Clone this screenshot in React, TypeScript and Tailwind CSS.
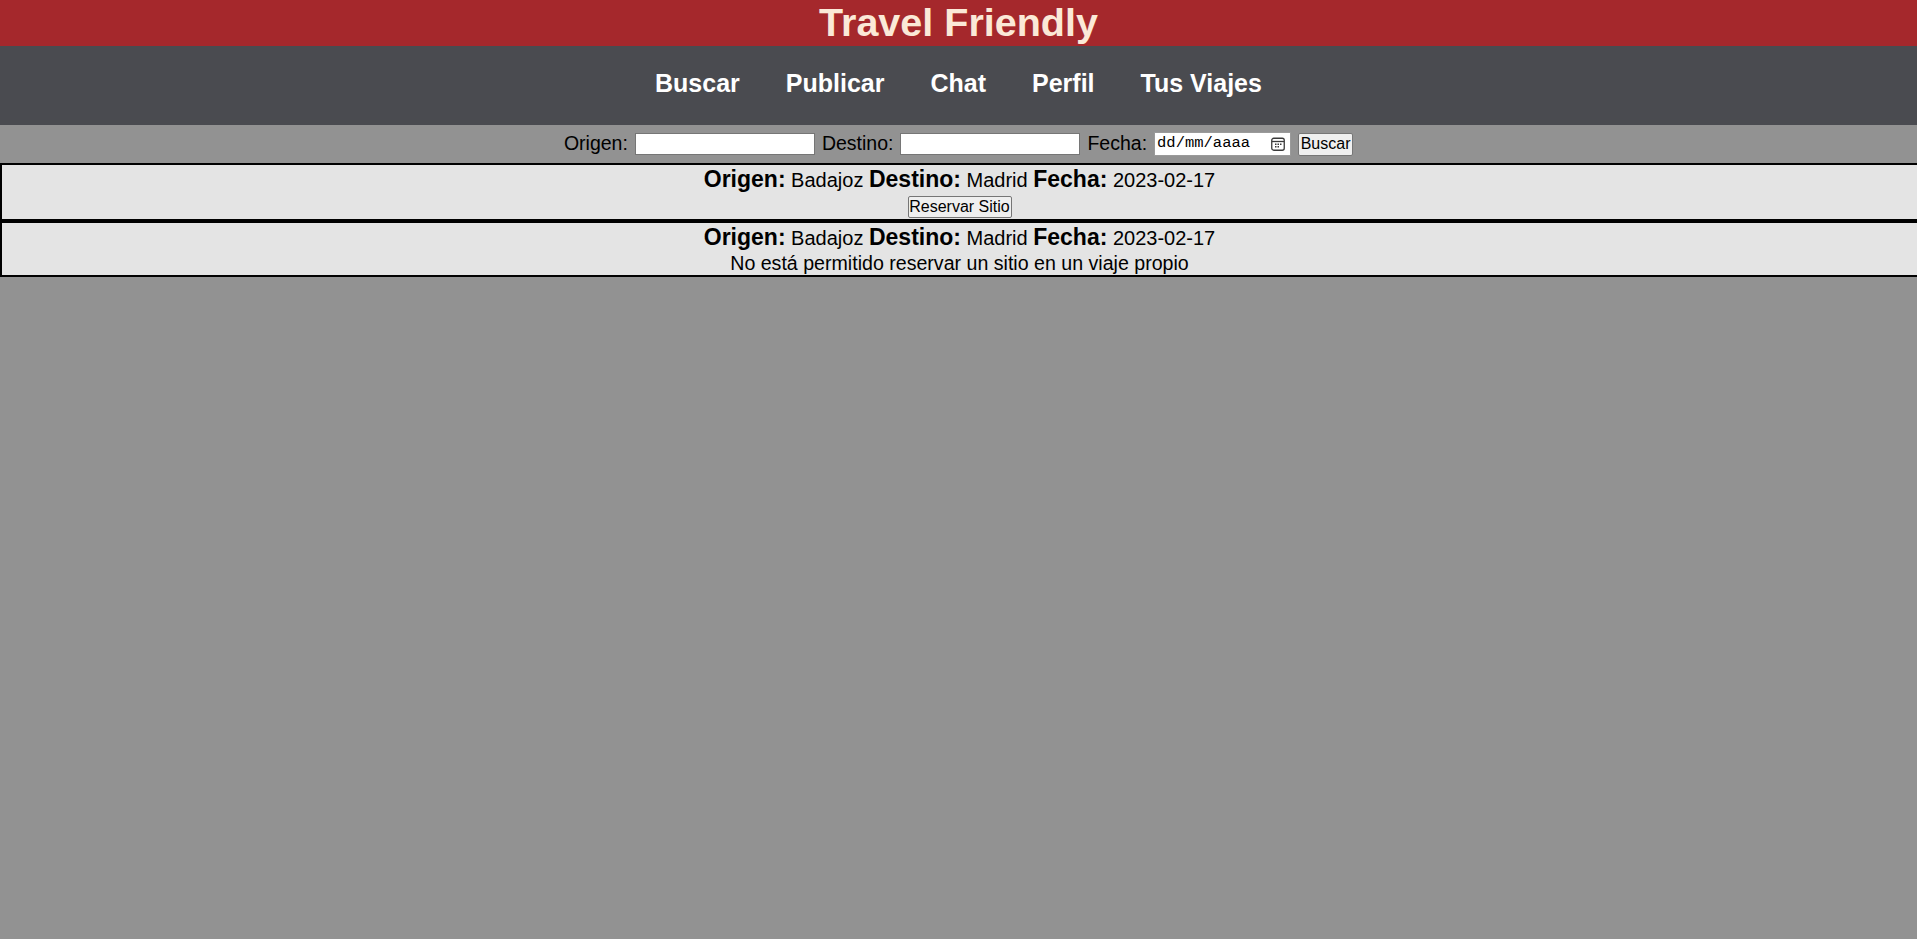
import React from 'react';

const trips = [
  { origen: 'Badajoz', destino: 'Madrid', fecha: '2023-02-17', propio: false },
  { origen: 'Badajoz', destino: 'Madrid', fecha: '2023-02-17', propio: true },
];

const navLinks = ['Buscar', 'Publicar', 'Chat', 'Perfil', 'Tus Viajes'];

const CalendarIcon = () => (
  <svg width="14" height="14" viewBox="0 0 14 14" fill="none">
    <rect x="0.75" y="1.25" width="12.5" height="12" rx="2" stroke="#3a3a3a" strokeWidth="1.3" />
    <line x1="1" y1="4.5" x2="13" y2="4.5" stroke="#3a3a3a" strokeWidth="1.3" />
    <rect x="4" y="6.5" width="1.5" height="1.5" fill="#3a3a3a" />
    <rect x="6.5" y="6.5" width="1.5" height="1.5" fill="#3a3a3a" />
    <rect x="9" y="6.5" width="1.5" height="1.5" fill="#3a3a3a" />
    <rect x="4" y="9" width="1.5" height="1.5" fill="#3a3a3a" />
    <rect x="6.5" y="9" width="1.5" height="1.5" fill="#3a3a3a" />
  </svg>
);

const SearchBar = () => (
  <form
    className="flex h-[38px] items-center justify-center gap-[7px] text-[19.5px] text-black"
    onSubmit={(e) => e.preventDefault()}
  >
    <label>Origen:</label>
    <input type="text" className="h-[22px] w-[180px] border border-[#767676] bg-white px-[2px] text-[16px] outline-none" />
    <label>Destino:</label>
    <input type="text" className="h-[22px] w-[180px] border border-[#767676] bg-white px-[2px] text-[16px] outline-none" />
    <label>Fecha:</label>
    <div className="flex h-[24px] w-[137px] items-center justify-between border border-[#9a9a9a] bg-white pl-[2px] pr-[5px]">
      <span className="font-['Liberation_Mono',monospace] text-[15.5px] leading-none text-black">dd/mm/aaaa</span>
      <CalendarIcon />
    </div>
    <button
      type="submit"
      className="h-[23px] w-[55px] rounded-[2px] border border-[#767676] bg-[#efefef] text-[16px] leading-none text-black"
    >
      Buscar
    </button>
  </form>
);

const TripRow = ({ trip }: { trip: (typeof trips)[number] }) => (
  <div className="border-2 border-r-0 border-black bg-[#e4e4e4] text-center">
    <div className="h-[29px] text-[20px] leading-[28px]">
      <b className="text-[23px]">Origen:</b> {trip.origen} <b className="text-[23px]">Destino:</b> {trip.destino}{' '}
      <b className="text-[23px]">Fecha:</b> {trip.fecha}
    </div>
    {trip.propio ? (
      <div className="h-[23px] text-[19.6px] leading-[23px]">No está permitido reservar un sitio en un viaje propio</div>
    ) : (
      <div className="flex h-[25px] justify-center pt-[2px]">
        <button className="h-[22px] w-[104px] rounded-[2px] border border-[#767676] bg-[#efefef] text-[16px] leading-none text-black">
          Reservar Sitio
        </button>
      </div>
    )}
  </div>
);

export default function App() {
  return (
    <div className="min-h-screen bg-[#929292] font-['Liberation_Sans',Arial,sans-serif]">
      <header className="h-[46px] bg-[#a5282c] text-center">
        <h1 className="text-[39.5px] font-bold leading-[45px] text-[#fbe9d7]">Travel Friendly</h1>
      </header>
      <nav className="flex h-[79px] items-center justify-center gap-[46px] bg-[#4a4b50] pb-[3px]">
        {navLinks.map((link) => (
          <a key={link} href="#" className="text-[25px] font-bold text-white">
            {link}
          </a>
        ))}
      </nav>
      <SearchBar />
      {trips.map((trip, i) => (
        <TripRow key={i} trip={trip} />
      ))}
    </div>
  );
}
